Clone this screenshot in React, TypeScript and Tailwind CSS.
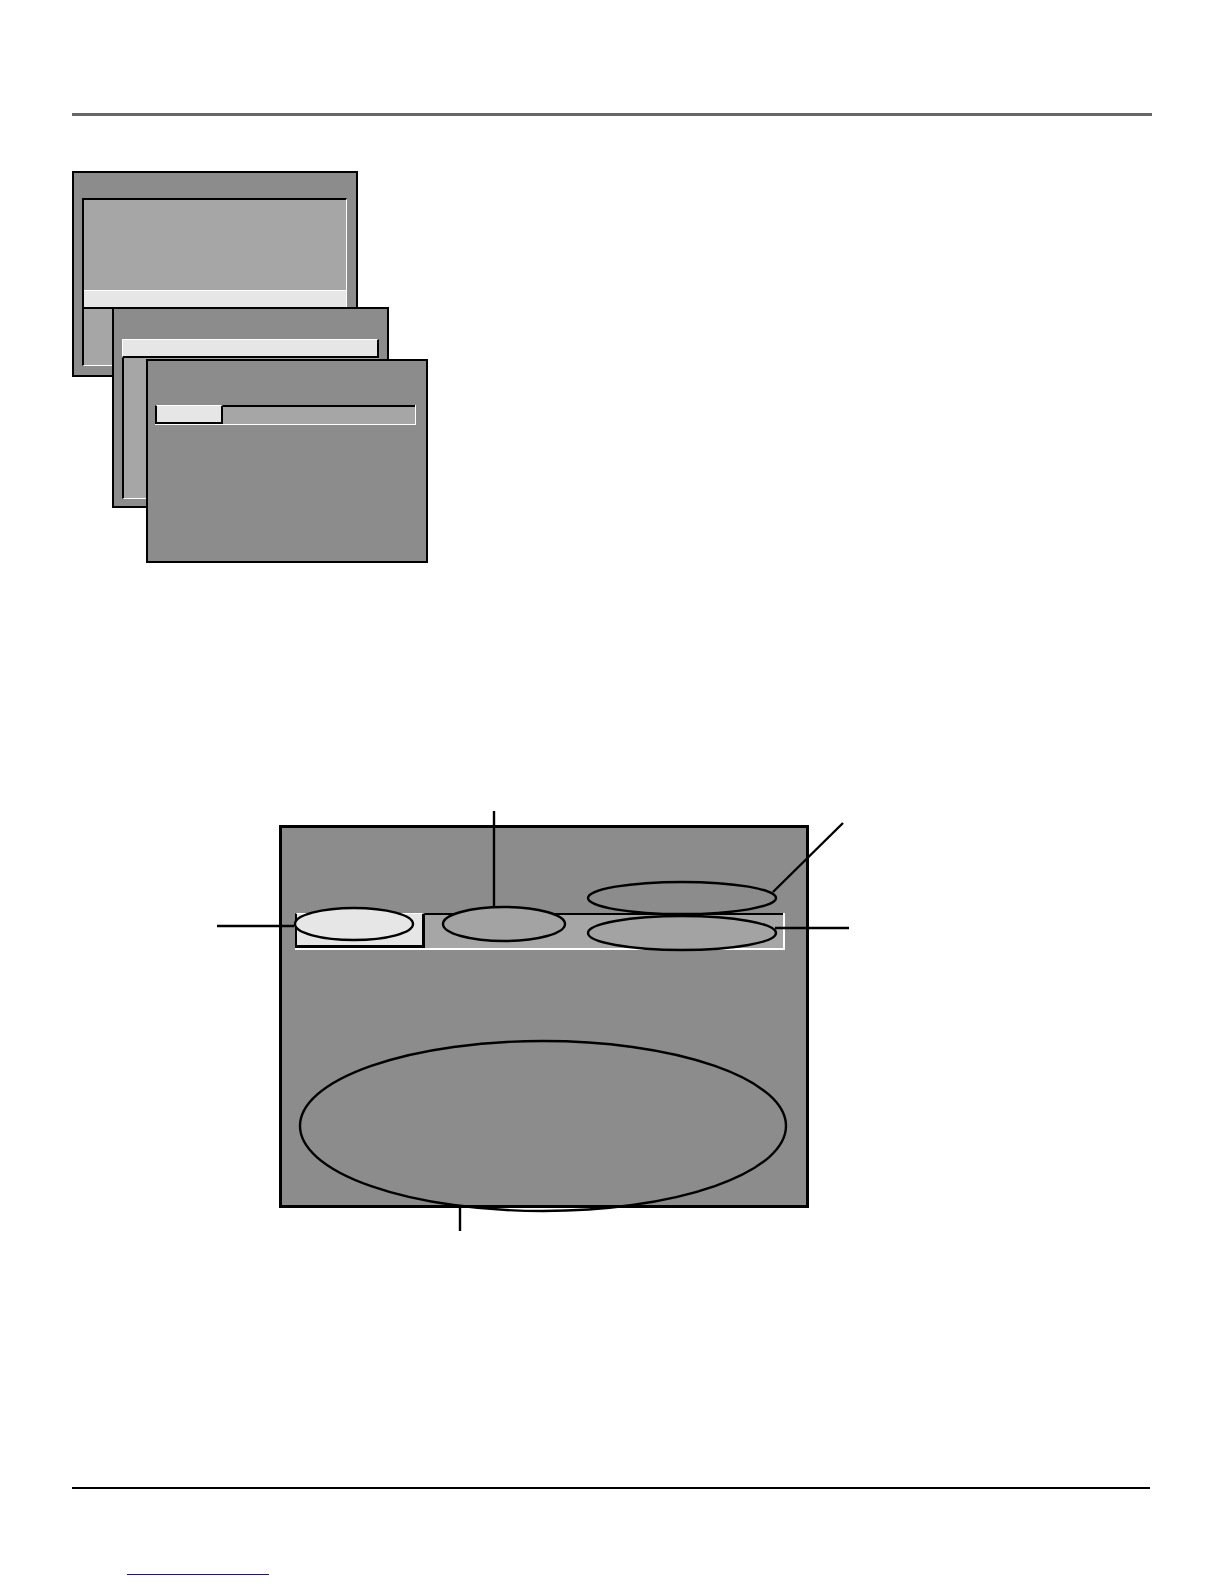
import React from 'react';

const DARK = 'bg-[#8c8c8c]';

function MenuStack() {
  return (
    <div className="relative ml-[72px] mt-[55px] h-[392px] w-[356px]">
      {/* back window */}
      <div className={`absolute left-0 top-0 h-[206px] w-[286px] border-2 border-black ${DARK}`}>
        <div className="ml-[8px] mt-[25px] flex h-[168px] w-[265px] flex-col border-l-2 border-t-2 border-b border-r border-black border-b-white border-r-white bg-[#a6a6a6]">
          <div className="mt-[90px] h-[19px] w-full border-t border-b-2 border-white border-b-black bg-[#e6e6e6]" />
        </div>
      </div>

      {/* middle window */}
      <div className={`absolute left-[40px] top-[136px] h-[201px] w-[277px] border-2 border-black ${DARK}`}>
        <div className="ml-[8px] mt-[30px] flex h-[160px] w-[257px] flex-col">
          <div className="h-[19px] w-full border-l border-t border-white border-r-2 border-r-black border-b-2 border-b-black bg-[#e6e6e6]" />
          <div className="flex-1 border-l-2 border-b border-black border-b-white bg-[#a6a6a6]" />
        </div>
      </div>

      {/* front window */}
      <div className={`absolute left-[74px] top-[188px] h-[204px] w-[282px] border-2 border-black ${DARK}`}>
        <div className="ml-[7px] mt-[44px] flex h-[20px] w-[261px] border-b border-r border-white">
          <div className="w-[68px] border-l-2 border-b-2 border-r-2 border-t border-black border-t-white bg-[#e6e6e6]" />
          <div className="flex-1 border-t-2 border-black bg-[#a6a6a6]" />
        </div>
      </div>
    </div>
  );
}

function Diagram() {
  return (
    <div className="relative ml-[200px] mt-[237px] h-[440px] w-[660px]">
      <div className={`absolute left-[79px] top-[25px] h-[383px] w-[530px] border-[3px] border-black ${DARK}`}>
        <div className="ml-[13px] mt-[85px] flex h-[37px] w-[490px] border-b-2 border-r-2 border-white">
          <div className="w-[130px] border-l-2 border-b-[3px] border-r-[3px] border-t border-black border-t-white bg-[#e6e6e6]" />
          <div className="flex-1 border-t-2 border-black bg-[#a6a6a6]" />
        </div>
      </div>

      <svg className="absolute inset-0" width="660" height="440" viewBox="0 0 660 440">
        <g stroke="#000" strokeWidth="2.4">
          <ellipse cx="154" cy="124" rx="59" ry="16" fill="#e6e6e6" />
          <ellipse cx="304" cy="124" rx="61" ry="17" fill="#a3a3a3" />
          <ellipse cx="482" cy="98" rx="94" ry="16" fill="#8c8c8c" />
          <ellipse cx="482" cy="133" rx="94" ry="17" fill="#a3a3a3" />
          <ellipse cx="343" cy="326" rx="243" ry="85" fill="none" />
          <line x1="294" y1="11" x2="294" y2="107" />
          <line x1="643" y1="23" x2="573" y2="92" />
          <line x1="17" y1="126" x2="94" y2="126" />
          <line x1="575" y1="128" x2="649" y2="128" />
          <line x1="260" y1="408" x2="260" y2="431" />
        </g>
      </svg>
    </div>
  );
}

export default function App() {
  return (
    <div className="relative h-[1584px] w-[1224px] overflow-hidden bg-white">
      <div className="pl-[72px] pt-[113px]">
        <div className="h-[3px] w-[1080px] bg-[#666666]" />
      </div>

      <MenuStack />
      <Diagram />

      <div className="ml-[72px] mt-[247px] h-[2px] w-[1078px] bg-black" />
      <div className="ml-[127px] mt-[85px] h-[1px] w-[142px] bg-[#1414a0]" />
    </div>
  );
}
